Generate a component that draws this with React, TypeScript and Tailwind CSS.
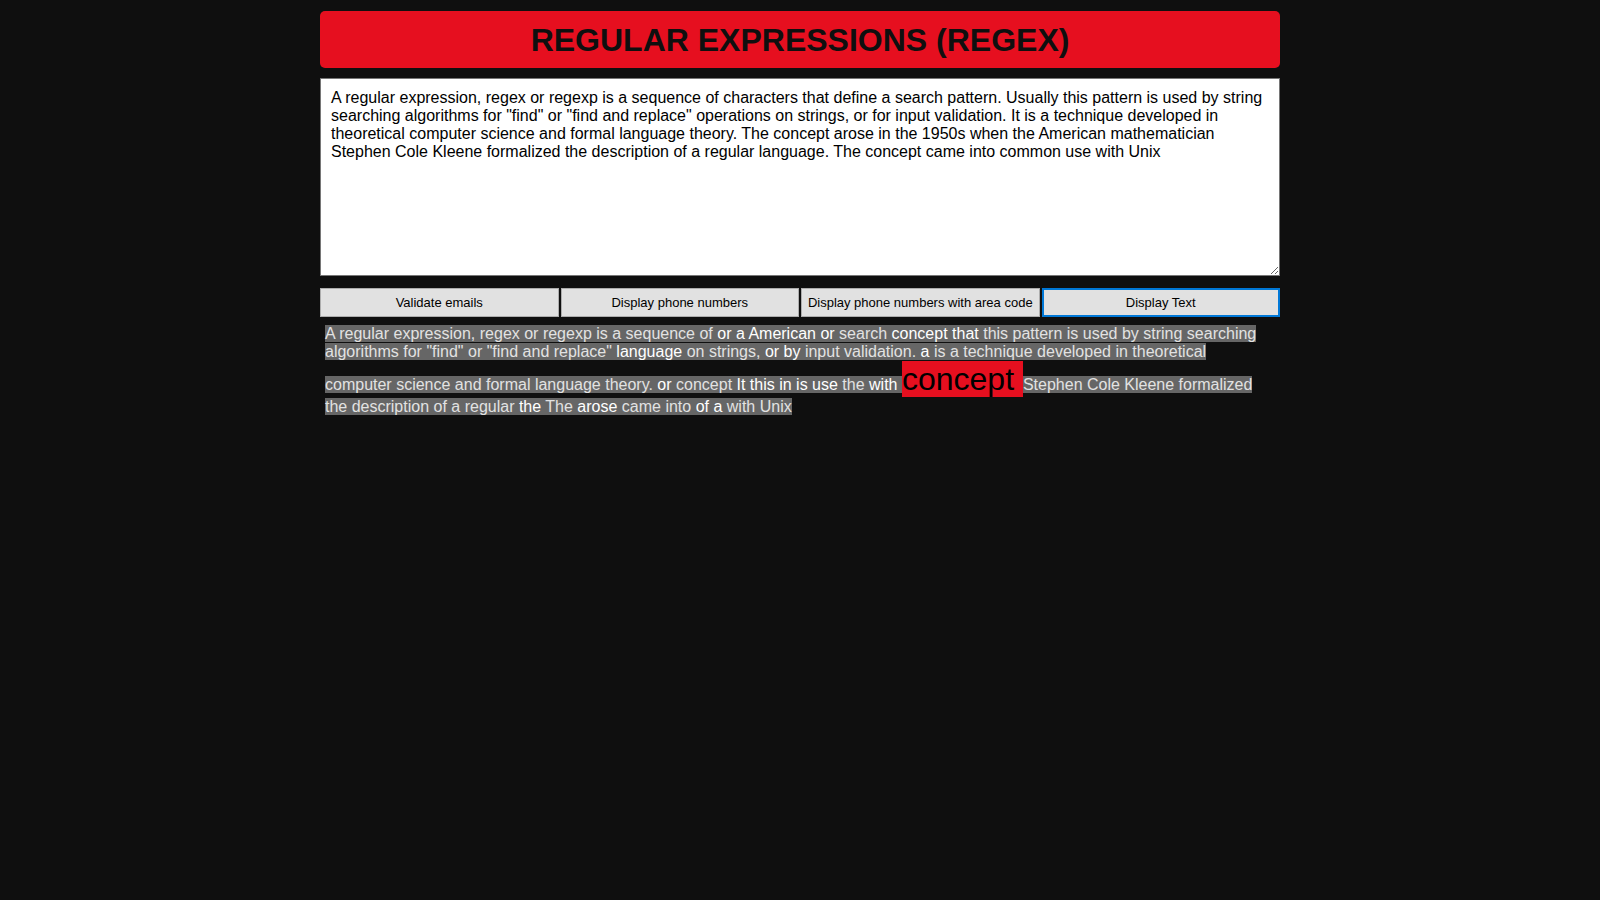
import { useState } from 'react';

const source =
    'A regular expression, regex or regexp is a sequence of characters that define a search pattern. Usually this pattern is used by string searching algorithms for "find" or "find and replace" operations on strings, or for input validation. It is a technique developed in theoretical computer science and formal language theory. The concept arose in the 1950s when the American mathematician Stephen Cole Kleene formalized the description of a regular language. The concept came into common use with Unix';

// [word, kind] -> 0 untouched, 1 replaced, 2 highlighted match
const result: [string, number][] = [
    ['A', 0], ['regular', 0], ['expression,', 0], ['regex', 0], ['or', 0], ['regexp', 0], ['is', 0], ['a', 0], ['sequence', 0], ['of', 0],
    ['or', 1], ['a', 1], ['American', 1], ['or', 1], ['search', 0], ['concept', 1], ['that', 1],
    ['this', 0], ['pattern', 0], ['is', 0], ['used', 0], ['by', 0], ['string', 0], ['searching', 0],
    ['algorithms', 0], ['for', 0], ['"find"', 0], ['or', 0], ['"find', 0], ['and', 0], ['replace"', 0],
    ['language', 1], ['on', 0], ['strings,', 0], ['or', 1], ['by', 1], ['input', 0], ['validation.', 0],
    ['a', 1], ['is', 0], ['a', 0], ['technique', 0], ['developed', 0], ['in', 0], ['theoretical', 0],
    ['computer', 0], ['science', 0], ['and', 0], ['formal', 0], ['language', 0], ['theory.', 0],
    ['or', 1], ['concept', 0], ['It', 1], ['this', 1], ['in', 1], ['is', 1], ['use', 1], ['the', 0], ['with', 1],
    ['concept', 2], ['Stephen', 0], ['Cole', 0], ['Kleene', 0], ['formalized', 0],
    ['the', 0], ['description', 0], ['of', 0], ['a', 0], ['regular', 0], ['the', 1], ['The', 0], ['arose', 1],
    ['came', 0], ['into', 0], ['of', 1], ['a', 1], ['with', 0], ['Unix', 0],
];

const buttons = ['Validate emails', 'Display phone numbers', 'Display phone numbers with area code', 'Display Text'];

export default function App() {
    const [text, setText] = useState(source);
    const [active, setActive] = useState(3);

    return (
        <main className="min-h-screen bg-[#0f0f0f] font-['Liberation_Sans',Arial,sans-serif]">
            <div className="mx-auto w-[960px] pt-[11px]">
                <h1 className="rounded-[5px] bg-[#e60f1f] pt-[11px] pb-[9px] text-center text-[32px] font-bold leading-[37px] text-[#0f0f0f]">
                    REGULAR EXPRESSIONS (REGEX)
                </h1>

                <textarea
                    value={text}
                    onChange={(e) => setText(e.target.value)}
                    className="mt-[10px] block h-[198px] w-full border border-[#767676] bg-white px-[10px] py-[10px] text-[16px] leading-[18px] text-black outline-none"
                />

                <div className="mt-[12px] grid grid-cols-4 gap-[2px]">
                    {buttons.map((label, i) => (
                        <button
                            key={label}
                            onClick={() => setActive(i)}
                            className={
                                i === active
                                    ? 'h-[29px] border-2 border-[#0078d7] bg-[#e1e1e1] text-[13px] text-black'
                                    : 'h-[29px] border border-[#adadad] bg-[#e1e1e1] text-[13px] text-black'
                            }
                        >
                            {label}
                        </button>
                    ))}
                </div>

                <div className="mt-[8px] pl-[5px] pr-[20px] text-[16px] leading-[normal]">
                    {result.map(([word, kind], i) =>
                        kind === 2 ? (
                            <span key={i} className="bg-[#e60f1f] text-[32px] leading-[normal] text-black">{word + ' '}</span>
                        ) : (
                            <span key={i} className={kind === 1 ? 'bg-[#666666] text-white' : 'bg-[#666666] text-[#e2e2e2]'}>
                                {word + ' '}
                            </span>
                        )
                    )}
                </div>
            </div>
        </main>
    );
}
